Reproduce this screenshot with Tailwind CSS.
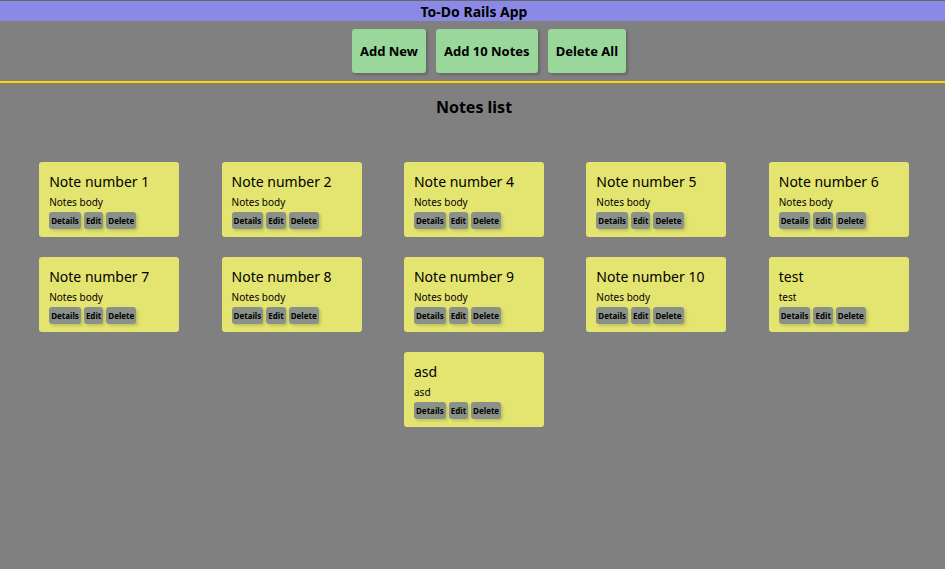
<!DOCTYPE html>
<html lang="en">
<head>
<meta charset="utf-8">
<title>To-Do Rails App</title>
<script src="https://cdn.jsdelivr.net/npm/@tailwindcss/browser@4"></script>
</head>
<body class="min-h-screen bg-[#808080] text-black font-['Noto_Sans',sans-serif]">
<header class="border-b-2 border-[#ffd700]">
  <h1 class="border-t border-[#666666] bg-[#8a8ae6] pt-0.5 pl-[3px] text-center text-sm leading-[18px] font-bold">To-Do Rails App</h1>
  <nav class="flex justify-center gap-2.5 pt-2 pb-2 pl-[33px]">
    <button class="h-11 rounded-[3px] bg-[#9ad79a] px-2 pt-0.5 text-[13px] font-bold shadow-[2px_2px_3px_#00000033]">Add New</button>
    <button class="h-11 rounded-[3px] bg-[#9ad79a] px-2 pt-0.5 text-[13px] font-bold shadow-[2px_2px_3px_#00000033]">Add 10 Notes</button>
    <button class="h-11 rounded-[3px] bg-[#9ad79a] px-2 pt-0.5 text-[13px] font-bold shadow-[2px_2px_3px_#00000033]">Delete All</button>
  </nav>
</header>
<main>
  <h2 class="mt-3 pl-[3px] text-center text-base leading-6 font-bold">Notes list</h2>
  <section id="notes" class="mt-[33px] flex flex-wrap justify-around pr-[15px] pl-[18px]"></section>
</main>
<template id="note">
  <article class="mx-2.5 my-2.5 w-[140px] rounded-[3px] bg-[#e4e471] px-2.5 pt-2.5 pb-2">
    <h3 class="text-sm leading-5"></h3>
    <p class="text-[10px] leading-5"></p>
    <div class="flex gap-[3px]">
      <a href="#" class="rounded-[3px] bg-[#8a9188] px-0.5 text-[8px] leading-[17px] font-bold shadow-[2px_2px_3px_#00000026]">Details</a>
      <a href="#" class="rounded-[3px] bg-[#8a9188] px-0.5 text-[8px] leading-[17px] font-bold shadow-[2px_2px_3px_#00000026]">Edit</a>
      <button class="rounded-[3px] bg-[#8a9188] px-0.5 text-[8px] leading-[17px] font-bold shadow-[2px_2px_3px_#00000026]">Delete</button>
    </div>
  </article>
</template>
<script>
const notes = [1, 2, 4, 5, 6, 7, 8, 9, 10].map(n => ['Note number ' + n, 'Notes body']).concat([['test', 'test'], ['asd', 'asd']]);
const list = document.getElementById('notes');
for (const [title, body] of notes) {
  const card = document.getElementById('note').content.cloneNode(true);
  card.querySelector('h3').textContent = title;
  card.querySelector('p').textContent = body;
  list.append(card);
}
</script>
</body>
</html>
